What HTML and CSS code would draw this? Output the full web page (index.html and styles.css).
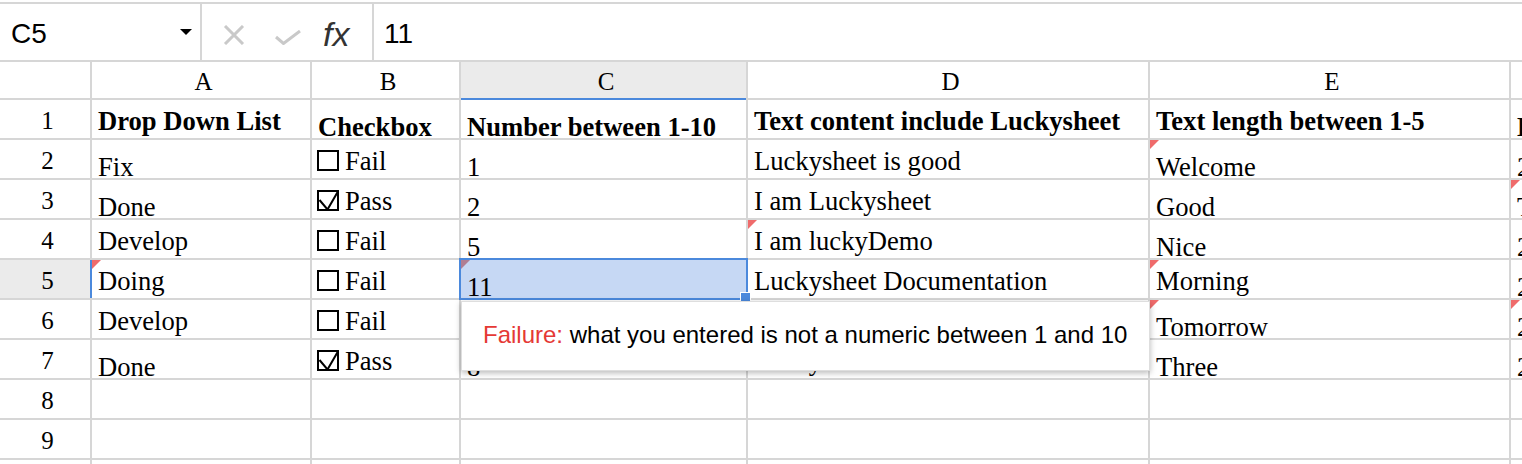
FILE: index.html
```html
<!DOCTYPE html>
<html>
<head>
<meta charset="utf-8">
<title>Luckysheet data verification</title>
<link rel="stylesheet" href="styles.css">
</head>
<body>
<div class="fbar">
  <div class="namebox"><span class="ref">C5</span><span class="caret"></span></div>
  <div class="fbtns">
    <svg class="ico-x" viewBox="0 0 22 20"><path d="M2 1L20 19M20 1L2 19"/></svg>
    <svg class="ico-ok" viewBox="0 0 26 15"><path d="M1 7L8.5 13.5L25 1"/></svg>
    <span class="fx">fx</span>
  </div>
  <div class="finput">11</div>
</div>
<div class="sheet">
  <div class="hd corner"></div>
  <div class="hd ch">A</div>
  <div class="hd ch">B</div>
  <div class="hd ch on">C</div>
  <div class="hd ch">D</div>
  <div class="hd ch">E</div>
  <div class="hd ch">F</div>

  <div class="hd rh">1</div>
  <div class="c b">Drop Down List</div>
  <div class="c b l">Checkbox</div>
  <div class="c b l">Number between 1-10</div>
  <div class="c b">Text content include Luckysheet</div>
  <div class="c b">Text length between 1-5</div>
  <div class="c b l">Date between 2020-09-01</div>

  <div class="hd rh">2</div>
  <div class="c l">Fix</div>
  <div class="c"><svg class="cb" viewBox="0 0 22 21"><rect x="1" y="1" width="20" height="19"/></svg>Fail</div>
  <div class="c l">1</div>
  <div class="c">Luckysheet is good</div>
  <div class="c l w">Welcome</div>
  <div class="c l">2020-09-02</div>

  <div class="hd rh">3</div>
  <div class="c l">Done</div>
  <div class="c"><svg class="cb" viewBox="0 0 22 21"><rect x="1" y="1" width="20" height="19"/><path d="M2.5 10L10.5 19.5L21.5 0.5"/></svg>Pass</div>
  <div class="c l">2</div>
  <div class="c">I am Luckysheet</div>
  <div class="c l">Good</div>
  <div class="c l w">Tomorrow</div>

  <div class="hd rh">4</div>
  <div class="c">Develop</div>
  <div class="c"><svg class="cb" viewBox="0 0 22 21"><rect x="1" y="1" width="20" height="19"/></svg>Fail</div>
  <div class="c l">5</div>
  <div class="c w">I am luckyDemo</div>
  <div class="c l">Nice</div>
  <div class="c l">2020-09-15</div>

  <div class="hd rh on">5</div>
  <div class="c w">Doing</div>
  <div class="c"><svg class="cb" viewBox="0 0 22 21"><rect x="1" y="1" width="20" height="19"/></svg>Fail</div>
  <div class="c l w sel">11</div>
  <div class="c">Luckysheet Documentation</div>
  <div class="c w">Morning</div>
  <div class="c l">2020-09-18</div>

  <div class="hd rh">6</div>
  <div class="c">Develop</div>
  <div class="c"><svg class="cb" viewBox="0 0 22 21"><rect x="1" y="1" width="20" height="19"/></svg>Fail</div>
  <div class="c l"></div>
  <div class="c"></div>
  <div class="c l w">Tomorrow</div>
  <div class="c l w">2020-10-01</div>

  <div class="hd rh">7</div>
  <div class="c l">Done</div>
  <div class="c"><svg class="cb" viewBox="0 0 22 21"><rect x="1" y="1" width="20" height="19"/><path d="M2.5 10L10.5 19.5L21.5 0.5"/></svg>Pass</div>
  <div class="c l">8</div>
  <div class="c">Luckysheet</div>
  <div class="c l">Three</div>
  <div class="c l">2020-09-25</div>

  <div class="hd rh">8</div>
  <div class="c"></div><div class="c"></div><div class="c"></div><div class="c"></div><div class="c"></div><div class="c"></div>

  <div class="hd rh">9</div>
  <div class="c"></div><div class="c"></div><div class="c"></div><div class="c"></div><div class="c"></div><div class="c"></div>

  <div class="hd rh">10</div>
  <div class="c"></div><div class="c"></div><div class="c"></div><div class="c"></div><div class="c"></div><div class="c"></div>

  <div class="tip"><span class="err">Failure:</span>&nbsp;what you entered is not a numeric between 1 and 10</div>
</div>
</body>
</html>
```
FILE: styles.css
```css
* { box-sizing: border-box; }
html, body {
  margin: 0;
  padding: 0;
  background: #fff;
  overflow: hidden;
}
body {
  width: 1522px;
  height: 464px;
  font-family: "Liberation Serif", "Times New Roman", serif;
  color: #000;
}

/* formula bar */
.fbar {
  display: flex;
  height: 58px;
  margin-top: 2px;
  border-top: 2px solid #d6d6d6;
  font-family: "Liberation Sans", Arial, sans-serif;
}
.namebox {
  width: 202px;
  border-right: 2px solid #d6d6d6;
  display: flex;
  align-items: flex-start;
  justify-content: space-between;
  padding: 16px 8px 0 11px;
}
.ref {
  font-size: 28px;
  line-height: 28px;
}
.caret {
  margin-top: 9px;
  width: 0;
  height: 0;
  border-left: 6px solid transparent;
  border-right: 6px solid transparent;
  border-top: 6px solid #000;
}
.fbtns {
  width: 172px;
  border-right: 2px solid #d6d6d6;
  display: flex;
  align-items: flex-start;
  padding-left: 21px;
}
.ico-x {
  width: 22px;
  height: 20px;
  margin-top: 21px;
  fill: none;
  stroke: #c9c9c9;
  stroke-width: 3;
}
.ico-ok {
  width: 26px;
  height: 15px;
  margin-top: 26px;
  margin-left: 30px;
  fill: none;
  stroke: #c9c9c9;
  stroke-width: 3;
}
.fx {
  margin-left: 22px;
  margin-top: 13px;
  font-style: italic;
  font-size: 34px;
  line-height: 34px;
  color: #333;
}
.finput {
  padding: 16px 0 0 10px;
  font-size: 28px;
  line-height: 28px;
}

/* sheet grid */
.sheet {
  position: relative;
  display: grid;
  grid-template-columns: 90px 218px 147px 285px 400px 359px 200px;
  grid-template-rows: 36px repeat(10, 38px);
  gap: 2px;
  padding-top: 2px;
  background: #d6d6d6;
  width: max-content;
}
.hd {
  background: #fff;
  display: flex;
  align-items: center;
  justify-content: center;
  font-size: 25px;
  line-height: 1;
  padding-top: 2px;
  padding-left: 5px;
}
.hd.on { background: #ebebeb; }
.ch.on { box-shadow: 0 2px 0 #4b89dc; }
.rh.on { box-shadow: 2px 0 0 #4b89dc; }

.c {
  position: relative;
  background: #fff;
  font-size: 26.6px;
  line-height: 1;
  padding: 8px 0 0 6px;
  white-space: nowrap;
}
.c.l { padding-top: 14px; }
.c.b { font-weight: bold; }
.c.w::before {
  content: "";
  position: absolute;
  left: 0;
  top: 0;
  border-top: 9px solid #ef6b6b;
  border-right: 9px solid transparent;
}
.c.sel {
  background: #c6d8f4;
  outline: 2px solid #4b89dc;
  z-index: 2;
}
.c.sel::before { border-top-color: #b07e93; }
.c.sel::after {
  content: "";
  position: absolute;
  right: -5px;
  bottom: -5px;
  width: 9px;
  height: 9px;
  background: #4b89dc;
  border: 1px solid #fff;
}

.cb {
  width: 22px;
  height: 21px;
  vertical-align: -1px;
  margin-right: 6px;
  margin-left: -1px;
  fill: none;
  stroke: #000;
  stroke-width: 2;
}

/* validation tooltip */
.tip {
  position: absolute;
  left: 461px;
  top: 241px;
  width: 689px;
  height: 70px;
  z-index: 3;
  display: flex;
  align-items: center;
  padding-left: 21px;
  padding-bottom: 2px;
  background: #fff;
  border: 1px solid #dedede;
  box-shadow: 0 2px 6px rgba(0, 0, 0, 0.28);
  font-family: "Liberation Sans", Arial, sans-serif;
  font-size: 24px;
  color: #000;
  white-space: nowrap;
}
.tip .err { color: #e53935; }
```
